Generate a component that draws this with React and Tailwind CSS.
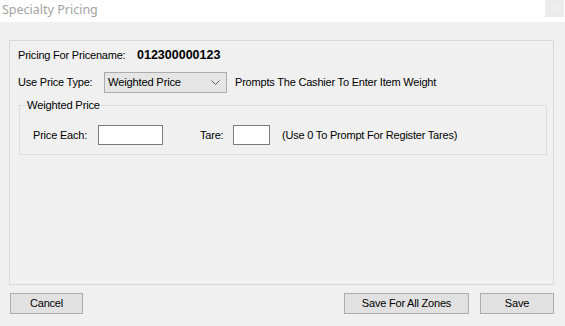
export default function App() {
  return (
    <div className="w-[565px] h-[326px] bg-[#f0f0f0] flex flex-col font-['Liberation_Sans',Arial,sans-serif] text-[11px] tracking-[-0.2px] text-black overflow-hidden">
      {/* Title bar */}
      <div className="h-[22px] bg-white flex justify-between shrink-0">
        <span className="pl-[2px] pt-[2px] text-[12.5px] tracking-normal text-[#a3a3a3] font-['Noto_Sans',sans-serif] leading-[16px]">
          Specialty Pricing
        </span>
        <div className="w-[19px] h-[17px] mr-[1px] bg-[#ececec] flex items-center justify-center text-[9px] text-[#f8f8f8]">
          x
        </div>
      </div>

      {/* Body */}
      <div className="pl-[9px] pr-[11px] pt-[18px]">
        <div className="h-[245px] border border-[#d9d9d9] pl-[8px] pt-[6px]">
          <div className="h-[16px] flex items-center">
            <span className="w-[119px]">Pricing For Pricename:</span>
            <span className="font-bold text-[12.5px] tracking-normal">012300000123</span>
          </div>

          <div className="mt-[9px] h-[21px] flex items-center">
            <span className="w-[86px]">Use Price Type:</span>
            <div className="w-[123px] h-[21px] bg-[#e5e5e5] border border-[#acacac] flex items-center justify-between pl-[3px] pr-[6px]">
              <span className="text-[11.2px]">Weighted Price</span>
              <svg width="9" height="6" viewBox="0 0 9 6" className="text-[#606060]">
                <polyline points="0.5,0.5 4.5,4.5 8.5,0.5" fill="none" stroke="currentColor" strokeWidth="1" />
              </svg>
            </div>
            <span className="ml-[8px]">Prompts The Cashier To Enter Item Weight</span>
          </div>

          <div className="relative mt-[12px] ml-[1px] w-[528px] h-[50px] border border-[#dcdcdc] pl-[13px] pt-[19px]">
            <span className="absolute left-[6px] top-[-8px] px-[1px] bg-[#f0f0f0] leading-[14px] text-[11.2px]">
              Weighted Price
            </span>
            <div className="flex items-center h-[20px]">
              <span className="w-[65px]">Price Each:</span>
              <div className="w-[65px] h-[20px] bg-white border border-[#7a7a7a]" />
              <span className="ml-[37px] w-[33px]">Tare:</span>
              <div className="w-[37px] h-[20px] bg-white border border-[#7a7a7a]" />
              <span className="ml-[12px]">(Use 0 To Prompt For Register Tares)</span>
            </div>
          </div>
        </div>

        {/* Buttons */}
        <div className="mt-[8px] flex items-center">
          <button className="ml-[1px] w-[73px] h-[21px] bg-[#e1e1e1] border border-[#adadad]">
            Cancel
          </button>
          <div className="flex-1" />
          <button className="w-[125px] h-[21px] bg-[#e1e1e1] border border-[#adadad]">
            Save For All Zones
          </button>
          <button className="ml-[11px] w-[74px] h-[21px] bg-[#e1e1e1] border border-[#adadad]">
            Save
          </button>
        </div>
      </div>
    </div>
  );
}
